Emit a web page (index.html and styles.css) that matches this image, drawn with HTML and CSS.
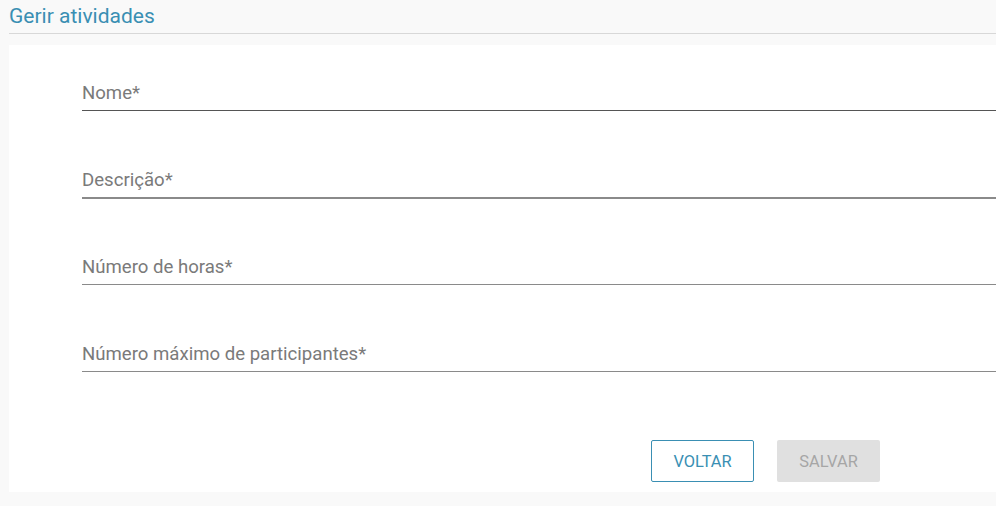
FILE: index.html
```html
<!DOCTYPE html>
<html lang="pt">
<head>
<meta charset="utf-8">
<title>Gerir atividades</title>
<link rel="stylesheet" href="styles.css">
</head>
<body>
<div class="page">
  <header class="page-header">
    <h1 class="page-title">Gerir atividades</h1>
  </header>
  <main class="card">
    <form class="form">
      <div class="field field-dark"><span class="field-label">Nome*</span></div>
      <div class="field field-focus"><span class="field-label">Descrição*</span></div>
      <div class="field"><span class="field-label">Número de horas*</span></div>
      <div class="field"><span class="field-label">Número máximo de participantes*</span></div>
      <div class="actions">
        <button type="button" class="btn btn-outline">VOLTAR</button>
        <button type="button" class="btn btn-disabled" disabled>SALVAR</button>
      </div>
    </form>
  </main>
</div>
</body>
</html>
```

FILE: styles.css
```css
html, body {
  margin: 0;
  padding: 0;
  background: #f9f9f9;
  font-family: Roboto, "Liberation Sans", Arial, sans-serif;
}

.page {
  padding-left: 9px;
  height: 506px;
  box-sizing: border-box;
}

.page-header {
  height: 33px;
  border-bottom: 1px solid #d8d8d8;
  box-sizing: content-box;
}

.page-title {
  margin: 0;
  padding-top: 4px;
  font-size: 21px;
  line-height: 25px;
  font-weight: 400;
  color: #3a8fb3;
}

.card {
  margin-top: 11px;
  background: #ffffff;
  height: 447px;
  padding-left: 73px;
  box-sizing: border-box;
}

.form {
  display: flex;
  flex-direction: column;
  padding-top: 35px;
}

.field {
  border-bottom: 1px solid #8a8a8a;
  padding-bottom: 4px;
  margin-bottom: 56px;
}

.field-dark {
  border-bottom-color: #555555;
}

.field-focus {
  border-bottom: 2px solid #8a8a8a;
  margin-bottom: 55px;
}

.field-label {
  display: block;
  font-size: 18.6px;
  line-height: 26px;
  color: #7a7a7a;
}

.actions {
  display: flex;
  gap: 23px;
  margin-top: 12px;
  padding-left: 569px;
}

.btn {
  width: 103px;
  height: 42px;
  font-family: Roboto, "Liberation Sans", Arial, sans-serif;
  font-size: 16.4px;
  border-radius: 2px;
  padding: 0;
}

.btn-outline {
  background: #ffffff;
  color: #3a8fb3;
  border: 1px solid #3a8fb3;
}

.btn-disabled {
  background: #e0e0e0;
  color: #a6a6a6;
  border: none;
}
```
